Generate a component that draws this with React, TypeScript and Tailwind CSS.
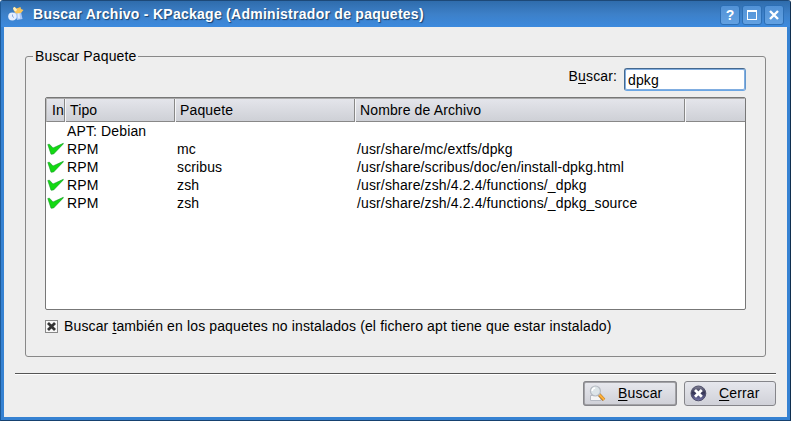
import React from "react";

const rows = [
  { installed: false, type: "APT: Debian", pkg: "", file: "" },
  { installed: true, type: "RPM", pkg: "mc", file: "/usr/share/mc/extfs/dpkg" },
  { installed: true, type: "RPM", pkg: "scribus", file: "/usr/share/scribus/doc/en/install-dpkg.html" },
  { installed: true, type: "RPM", pkg: "zsh", file: "/usr/share/zsh/4.2.4/functions/_dpkg" },
  { installed: true, type: "RPM", pkg: "zsh", file: "/usr/share/zsh/4.2.4/functions/_dpkg_source" },
];

function AppIcon() {
  return (
    <svg width="16" height="16" viewBox="0 0 16 16" className="shrink-0">
      <path d="M6 6.5L13 6 14.5 13 9 14Z" fill="#a9c6f5" />
      <path d="M9.5 7L11.5 7 12 12.5 10 12.5Z" fill="#dce9ff" />
      <path d="M5 2.5L6.5 0.8 8.5 2.5 12.5 1 13 3 15.5 4 13 7 8 7.5 6 5Z" fill="#f8c45a" />
      <path d="M5 2L6.5 1 9 3.5 8 5.5 6 4.5Z" fill="#fff0be" />
      <circle cx="4.3" cy="10.5" r="4.1" fill="#e5eeff" />
      <path d="M4.5 8.5V10.5L6 11.5" fill="none" stroke="#8aa9df" />
    </svg>
  );
}

function Check() {
  return (
    <svg width="17" height="14" viewBox="0 0 17 14" className="block">
      <path d="M0.8 2.5L2.5 2.2 6 6 16.3 1.3 16.3 1.9 6.6 12 4 12.2Z" fill="#12d912" stroke="#1b9a2b" strokeWidth="0.6" />
    </svg>
  );
}

function SearchIcon() {
  return (
    <svg width="17" height="17" viewBox="0 0 17 17" className="shrink-0">
      <path d="M1.5 10.5H12V15.5H1.5Z" fill="#f5f5f5" stroke="#b5b9c2" />
      <path d="M10 9.5L15 14.9" stroke="#a16c27" strokeWidth="3.4" />
      <path d="M10 9.2L15.2 14.7" stroke="#ffb039" strokeWidth="2.2" />
      <circle cx="6.4" cy="6" r="5" fill="#dce4e8" stroke="#b6bbc3" strokeWidth="1.2" />
      <path d="M3.2 6Q3.2 3 6.2 3" stroke="#fff" strokeWidth="1.6" fill="none" />
    </svg>
  );
}

function CloseIcon() {
  return (
    <svg width="17" height="17" viewBox="0 0 17 17" className="shrink-0">
      <defs>
        <linearGradient id="orb" x1="0" y1="0" x2="0" y2="1">
          <stop offset="0" stopColor="#858599" />
          <stop offset="0.45" stopColor="#353555" />
          <stop offset="1" stopColor="#7474aa" />
        </linearGradient>
      </defs>
      <circle cx="8.4" cy="8.4" r="7.4" fill="url(#orb)" stroke="#50506a" />
      <path d="M5 5L11.8 11.8M11.8 5L5 11.8" stroke="#fff" strokeWidth="2.8" />
    </svg>
  );
}

function TitleButton({ children }: { children: React.ReactNode }) {
  return (
    <button className="flex h-[20px] w-[20px] items-center justify-center rounded-[3px] border border-[#2d6fb5] bg-linear-to-b from-[#5292d6] to-[#62a1e2]">
      {children}
    </button>
  );
}

export default function App() {
  return (
    <div className="flex h-[421px] w-[791px] flex-col overflow-hidden rounded-t-[3px] border border-t-[#1d4978] border-r-[#102f50] border-b-[#16416f] border-l-[#1d5a99] bg-[#3682d2] font-['Liberation_Sans',Arial,sans-serif] text-[14px] leading-[18px] tracking-[0.13px] text-black">
      <header className="flex h-[26px] shrink-0 items-center bg-linear-to-b from-[#2f6cac] via-[#3d80c8] to-[#3c8ade] pr-[6px] pl-[7px]">
        <AppIcon />
        <h1 className="ml-[9px] flex-1 text-[14px] font-bold tracking-[0.265px] whitespace-nowrap text-white [text-shadow:1px_1px_1px_#173f6c]">
          Buscar Archivo - KPackage (Administrador de paquetes)
        </h1>
        <div className="mt-px flex gap-[2px]">
          <TitleButton><span className="text-[14px] font-bold text-white">?</span></TitleButton>
          <TitleButton><span className="h-[10px] w-[10px] border border-t-2 border-white" /></TitleButton>
          <TitleButton>
            <svg width="10" height="10" viewBox="0 0 10 10"><path d="M1 1L9 9M9 1L1 9" stroke="white" strokeWidth="2.4" /></svg>
          </TitleButton>
        </div>
      </header>
      <main className="mx-[3px] mb-[3px] flex flex-1 flex-col bg-[#eeeeee]">
        <fieldset className="mt-[20px] mr-[21px] ml-[21px] h-[310px] rounded-[3px] border border-[#888] px-[19px]">
          <legend className="-ml-[12px] h-[18px] px-[2px]">Buscar Paquete</legend>
          <div className="mt-[3px] flex h-[23px] justify-end">
            <label className="mr-[7px] -mt-px" htmlFor="query">B<u className="underline-offset-2">u</u>scar:</label>
            <input id="query" defaultValue="dpkg" className="h-[23px] w-[122px] rounded-[3px] border border-t-[#45688e] border-r-[#6498cd] border-b-[#6aa6e5] border-l-[#45688e] bg-white px-[3px] shadow-[inset_0_0_0_1px_#80ade0] outline-none" />
          </div>
          <div className="mt-[6px] h-[213px] overflow-hidden rounded-[2px] border border-[#777] bg-white">
            <div className="grid h-[24px] grid-cols-[18px_110px_180px_330px_1fr] border-t border-b border-l border-t-[#aaa] border-b-[#888] border-l-[#bbb] bg-linear-to-b from-[#e4e5eb] to-[#ced0d6] leading-[23px]">
              <span className="overflow-hidden border-r border-[#888] pl-[5px]">In</span>
              <span className="border-r border-l border-r-[#888] border-l-[#f6f6f8] pl-[4px]">Tipo</span>
              <span className="border-r border-l border-r-[#888] border-l-[#f6f6f8] pl-[4px]">Paquete</span>
              <span className="border-r border-l border-r-[#888] border-l-[#f6f6f8] pl-[4px]">Nombre de Archivo</span>
              <span className="border-l border-l-[#f6f6f8]" />
            </div>
            {rows.map((row, index) => (
              <div key={index} className="grid h-[18px] grid-cols-[21px_110px_180px_1fr] whitespace-nowrap">
                <span className="pt-[2px] pl-px">{row.installed && <Check />}</span>
                <span>{row.type}</span>
                <span>{row.pkg}</span>
                <span>{row.file}</span>
              </div>
            ))}
          </div>
          <label className="mt-[7px] flex items-center">
            <span className="flex h-[13px] w-[13px] items-center justify-center border border-[#888] bg-[#f8f8f8]">
              <svg width="9" height="9" viewBox="0 0 9 9"><path d="M1 1L8 8M8 1L1 8" stroke="#333" strokeWidth="2.8" /></svg>
            </span>
            <span className="ml-[6px] whitespace-nowrap">Buscar <u className="underline-offset-2">t</u>ambién en los paquetes no instalados (el fichero apt tiene que estar instalado)</span>
          </label>
        </fieldset>
        <div className="mt-[16px] mr-[11px] ml-[11px] border-t border-b border-t-[#555] border-b-white" />
        <footer className="mt-[6px] mr-[11px] flex items-center justify-end gap-[7px]">
          <button className="flex h-[25px] w-[94px] items-center rounded-[3px] border-2 border-[#a2a2a6] bg-linear-to-b from-[#e6e7ed] to-[#d0d1d8] pl-[4px] outline outline-offset-[-1px] outline-[#85858a]">
            <SearchIcon /><span className="-mt-[2px] ml-[12px]"><u className="underline-offset-2">B</u>uscar</span>
          </button>
          <button className="flex h-[25px] w-[92px] items-center rounded-[3px] border border-[#85858a] bg-linear-to-b from-[#e6e7ed] to-[#d0d1d8] pl-[5px]">
            <CloseIcon /><span className="-mt-[2px] ml-[12px]"><u className="underline-offset-2">C</u>errar</span>
          </button>
        </footer>
      </main>
    </div>
  );
}
